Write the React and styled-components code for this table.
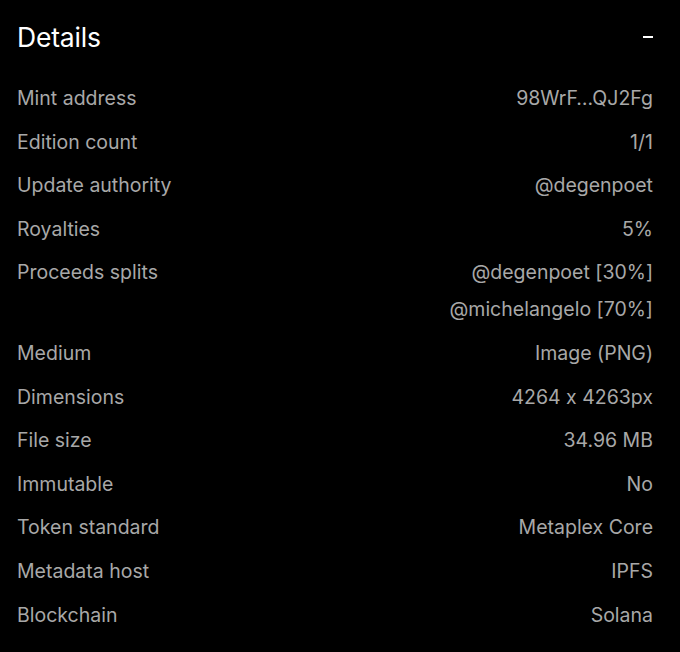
import React from 'react'
import styled, { createGlobalStyle } from 'styled-components'

const Global = createGlobalStyle`
  html, body {
    margin: 0;
    background: #000;
  }
  body {
    font-family: Inter, "Noto Sans", sans-serif;
    font-feature-settings: "calt" 0;
  }
`

const Panel = styled.section`
  background: #000;
  padding: 0 27px 0 17px;
  min-height: 652px;
  box-sizing: border-box;
`

const Header = styled.div`
  height: 74px;
  display: flex;
  align-items: center;
  justify-content: space-between;
`

const Title = styled.h2`
  margin: 0 0 1px;
  font-size: 26.5px;
  font-weight: 400;
  color: #fff;
  letter-spacing: -0.2px;
`

const Collapse = styled.button`
  background: none;
  border: none;
  padding: 0;
  width: 10px;
  height: 20px;
  display: flex;
  align-items: center;
  cursor: pointer;
  &::before {
    content: '';
    display: block;
    width: 10px;
    height: 2px;
    background: #fff;
  }
`

const List = styled.dl`
  margin: 0;
  padding-top: 12px;
  display: flex;
  flex-direction: column;
  gap: 19.6px;
`

const Row = styled.div`
  display: flex;
  justify-content: space-between;
  align-items: flex-start;
`

const Label = styled.dt`
  font-size: 19.5px;
  line-height: 24px;
  color: #a8a8a8;
`

const Values = styled.dd`
  margin: 0;
  display: flex;
  flex-direction: column;
  align-items: flex-end;
  gap: 13px;
`

const Value = styled.span`
  font-size: 19.5px;
  line-height: 24px;
  color: #a8a8a8;
`

const details = [
  ['Mint address', ['98WrF…QJ2Fg']],
  ['Edition count', ['1/1']],
  ['Update authority', ['@degenpoet']],
  ['Royalties', ['5%']],
  ['Proceeds splits', ['@degenpoet [30%]', '@michelangelo [70%]']],
  ['Medium', ['Image (PNG)']],
  ['Dimensions', ['4264 x 4263px']],
  ['File size', ['34.96 MB']],
  ['Immutable', ['No']],
  ['Token standard', ['Metaplex Core']],
  ['Metadata host', ['IPFS']],
  ['Blockchain', ['Solana']],
]

export default function App() {
  return (
    <>
      <Global />
      <Panel>
        <Header>
          <Title>Details</Title>
          <Collapse aria-label="Collapse" />
        </Header>
        <List>
          {details.map(([label, values]) => (
            <Row key={label}>
              <Label>{label}</Label>
              <Values>
                {values.map(v => (
                  <Value key={v}>{v}</Value>
                ))}
              </Values>
            </Row>
          ))}
        </List>
      </Panel>
    </>
  )
}
